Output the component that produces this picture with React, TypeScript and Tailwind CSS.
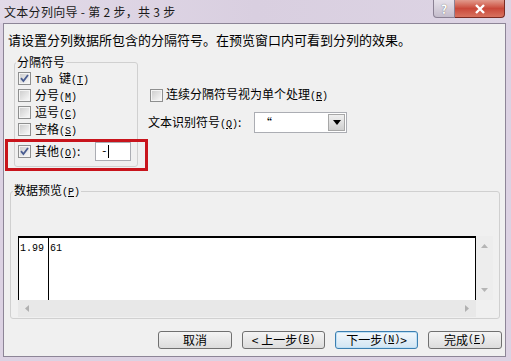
import React from 'react';

// Win7-style "文本分列向导" step 2 dialog

const CJK = "font-['Noto_Sans_CJK_SC',sans-serif]";

function Key({ k }: { k: string }) {
  return (
    <span className="font-['Liberation_Mono',monospace] text-[10px]">
      (<span className="underline underline-offset-1">{k}</span>)
    </span>
  );
}

function Box({ checked }: { checked?: boolean }) {
  return (
    <span className="relative flex h-[13px] w-[13px] shrink-0 items-center justify-center border border-[#8e8f8f] bg-[#f4f4f4]">
      <span className="h-[9px] w-[9px] bg-gradient-to-br from-[#cfcfcf] to-[#f7f7f7]" />
      {checked && (
        <svg className="absolute left-0 top-0" width="11" height="11" viewBox="0 0 11 11">
          <path d="M2 5.2 L4.4 8 L9 2" fill="none" stroke="#4a5d91" strokeWidth="1.8" />
        </svg>
      )}
    </span>
  );
}

function CheckRow({ checked, children }: { checked?: boolean; children: React.ReactNode }) {
  return (
    <div className="flex h-[17px] items-center gap-[4px]">
      <Box checked={checked} />
      <span className="text-[12px] leading-none">{children}</span>
    </div>
  );
}

function Button({ children, focused }: { children: React.ReactNode; focused?: boolean }) {
  return (
    <div
      className={
        focused
          ? 'flex h-[18px] w-[83px] items-center justify-center rounded-[3px] border border-[#3c7fb1] bg-gradient-to-b from-[#f3f8fc] to-[#d2e5f3] text-[12px] leading-none shadow-[inset_0_0_0_1px_#bfe0f5]'
          : 'flex h-[18px] w-[83px] items-center justify-center rounded-[3px] border border-[#707070] bg-gradient-to-b from-[#f4f4f4] to-[#dcdcdc] text-[12px] leading-none'
      }
    >
      {children}
    </div>
  );
}

export default function App() {
  return (
    <div className={`relative h-[361px] w-[511px] overflow-hidden bg-[#dcd2e3] text-black ${CJK}`}>
      {/* Title bar */}
      <div className="flex h-[23px] items-start justify-between bg-gradient-to-r from-[#e2dae8] via-[#d9cfe0] to-[#ddd4e4]">
        <div className="flex h-[23px] items-center pl-[4px] text-[12px] tracking-[0.3px] text-[#1a1a1a]">
          文本分列向导 - 第 2 步，共 3 步
        </div>
        <div className="mr-[6px] flex">
          <div className="flex h-[18px] w-[22px] items-center justify-center rounded-bl-[4px] border border-t-0 border-[#8b8194] bg-gradient-to-b from-[#e6e1ea] to-[#c4bccb] text-[12px] font-bold text-white [text-shadow:0_0_1px_#555]">
            ?
          </div>
          <div className="flex h-[18px] w-[50px] items-center justify-center rounded-br-[4px] border border-l-0 border-t-0 border-[#7a2b22] bg-gradient-to-b from-[#e19a8d] via-[#c9483a] to-[#d8725f]">
            <svg width="12" height="10" viewBox="0 0 12 10">
              <path d="M2 1 L10 9 M10 1 L2 9" stroke="white" strokeWidth="2.4" />
            </svg>
          </div>
        </div>
      </div>

      {/* Client area */}
      <div className="ml-[3px] flex h-[334px] w-[503px] flex-col border border-[#8d8597] bg-[#f0f0f0]">
        <div className="ml-[4px] mt-[8px] text-[13px] leading-[16px]">
          请设置分列数据所包含的分隔符号。在预览窗口内可看到分列的效果。
        </div>

        <div className="mt-[6px] flex">
          {/* Delimiters group */}
          <fieldset className="ml-[10px] h-[113px] w-[124px] rounded-[3px] border border-[#d0d0d0] px-0">
            <legend className="ml-[1px] px-[1px] text-[12px] leading-[16px]">分隔符号</legend>
            <div className="ml-[3px] flex flex-col">
              <CheckRow checked>
                <span className="font-['Liberation_Mono',monospace] text-[10px]">Tab </span>键<Key k="T" />
              </CheckRow>
              <CheckRow>
                分号<Key k="M" />
              </CheckRow>
              <CheckRow>
                逗号<Key k="C" />
              </CheckRow>
              <CheckRow>
                空格<Key k="S" />
              </CheckRow>
              <div className="mt-[4px] flex h-[19px] items-center gap-[4px]">
                <Box checked />
                <span className="w-[56px] text-[12px] leading-none">
                  其他<Key k="O" />:
                </span>
                <div className="flex h-[19px] w-[36px] items-center border border-[#abadb3] bg-white pl-[5px]">
                  <span className="font-['Liberation_Mono',monospace] text-[11px] leading-none">-</span>
                  <span className="h-[13px] w-px bg-black" />
                </div>
              </div>
            </div>
          </fieldset>

          {/* Right options */}
          <div className="ml-[10px] mt-[33px] flex flex-col">
            <div className="ml-[2px] flex h-[16px] items-center gap-[3px]">
              <Box />
              <span className="text-[12px] leading-none">
                连续分隔符号视为单个处理<Key k="R" />
              </span>
            </div>
            <div className="mt-[9px] flex h-[21px] items-center">
              <span className="w-[106px] text-[12px] leading-none">
                文本识别符号<Key k="Q" />:
              </span>
              <div className="flex h-[21px] w-[93px] items-center border border-[#abadb3] bg-white">
                <span className="flex-1 pl-[5px] text-[12px] leading-none">“</span>
                <div className="mr-px flex h-[17px] w-[17px] items-center justify-center border border-[#a7a7a7] bg-gradient-to-b from-[#f0f0f0] to-[#cfcfcf]">
                  <svg width="8" height="5" viewBox="0 0 8 5">
                    <path d="M0 0 L8 0 L4 5 Z" fill="#000" />
                  </svg>
                </div>
              </div>
            </div>
          </div>
        </div>

        {/* Data preview */}
        <fieldset className="ml-[6px] mt-[15px] h-[137px] w-[490px] rounded-[3px] border border-[#d0d0d0] px-[2px]">
          <legend className="px-[1px] text-[12px] leading-[16px]">
            数据预览<Key k="P" />
          </legend>
          <div className="ml-[5px] mr-[4px] mt-[35px] flex flex-col">
            <div className="flex h-[64px]">
              <div className="flex flex-1 border-x border-t-2 border-black bg-white font-['Liberation_Mono',monospace] text-[10px] leading-none">
                <div className="w-[30px] border-r border-black pl-px pt-[6px]">1.99</div>
                <div className="pl-[1px] pt-[6px]">61</div>
              </div>
              <div className="flex w-[17px] flex-col items-center justify-between bg-[#ededed] py-[8px]">
                <svg width="7" height="4" viewBox="0 0 7 4">
                  <path d="M0 4 L7 4 L3.5 0 Z" fill="#b5b5b5" />
                </svg>
                <svg width="7" height="4" viewBox="0 0 7 4">
                  <path d="M0 0 L7 0 L3.5 4 Z" fill="#b5b5b5" />
                </svg>
              </div>
            </div>
            <div className="flex h-[17px]">
              <div className="flex flex-1 items-center justify-between bg-[#e8e8e8] px-[7px]">
                <svg width="4" height="7" viewBox="0 0 4 7">
                  <path d="M4 0 L4 7 L0 3.5 Z" fill="#b0b0b0" />
                </svg>
                <svg width="4" height="7" viewBox="0 0 4 7">
                  <path d="M0 0 L0 7 L4 3.5 Z" fill="#b0b0b0" />
                </svg>
              </div>
              <div className="w-[17px] bg-[#f0f0f0]" />
            </div>
          </div>
        </fieldset>

        {/* Buttons */}
        <div className="mr-[3px] mt-[12px] flex justify-end gap-[10px]">
          <div className="flex h-[18px] w-[74px] items-center justify-center rounded-[3px] border border-[#707070] bg-gradient-to-b from-[#f4f4f4] to-[#dcdcdc] text-[12px] leading-none">
            取消
          </div>
          <Button>
            &lt; 上一步<Key k="B" />
          </Button>
          <Button focused>
            下一步<Key k="N" /> &gt;
          </Button>
          <div className="flex h-[18px] w-[74px] items-center justify-center rounded-[3px] border border-[#707070] bg-gradient-to-b from-[#f4f4f4] to-[#dcdcdc] text-[12px] leading-none">
            完成<Key k="F" />
          </div>
        </div>
      </div>

      {/* Red annotation box */}
      <div className="absolute left-[5px] top-[139px] h-[32px] w-[143px] border-[3px] border-[#c8141c]" />
    </div>
  );
}
